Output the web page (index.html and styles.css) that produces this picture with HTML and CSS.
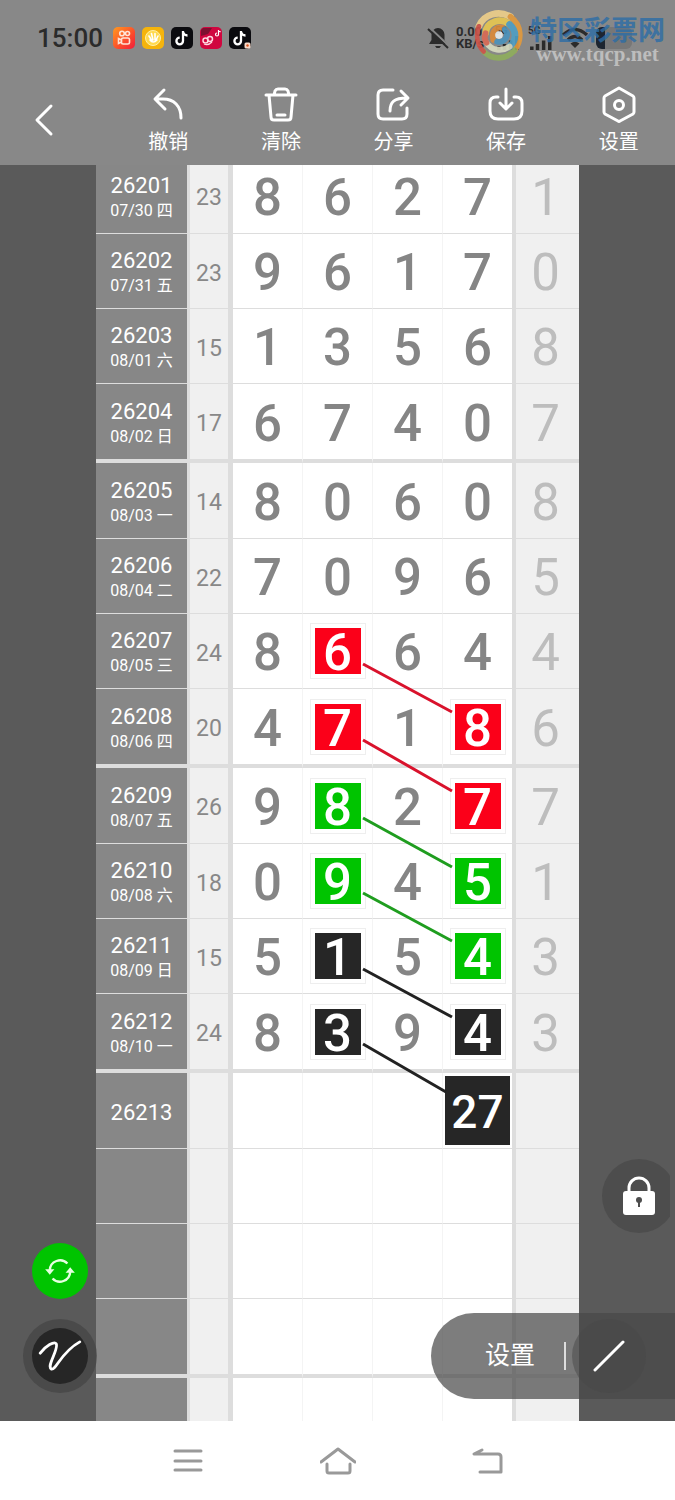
FILE: index.html
```html
<!DOCTYPE html>
<html lang="zh-CN">
  <head>
    <meta charset="UTF-8" />
    <meta name="viewport" content="width=device-width, initial-scale=1.0" />
    <title>走势图</title>
    <link rel="stylesheet" href="styles.css">
  </head>
  <body>
    <header class="header">
      <div class="status-bar">
        <span class="clock">15:00</span>
        <div class="app-icons">
          <svg class="app-icon" viewBox="0 0 22 22">
            <defs>
              <linearGradient id="ks" x1="0" y1="0" x2="1" y2="1">
                <stop offset="0" stop-color="#ff9a1f" />
                <stop offset="0.6" stop-color="#fb4a2c" />
                <stop offset="1" stop-color="#f01c3c" />
              </linearGradient>
            </defs>
            <rect width="22" height="22" rx="5" fill="url(#ks)" />
            <g fill="none" stroke="#ffe3d6" stroke-width="1.6">
              <circle cx="9" cy="6.5" r="2.3" />
              <circle cx="14.5" cy="6.5" r="2" />
              <rect x="8.5" y="11" width="8" height="6" rx="1.6" />
              <path d="M8.500 13 L5.500 11.500 V16.500 L8.500 15" />
            </g>
          </svg>
          <svg class="app-icon" viewBox="0 0 22 22">
            <rect width="22" height="22" rx="5" fill="#f5b40c" />
            <circle cx="11" cy="11" r="7.500" fill="#ffd94d" stroke="#fff0a8" stroke-width="1" />
            <path d="M7 9 L10 14 M9.500 6.500 L11 13 M13 6.500 V13 M16 9 L13.500 14 M8 13 Q11 17 15 13" fill="none" stroke="#fff" stroke-width="1.600" stroke-linecap="round" />
          </svg>
          <svg class="app-icon" viewBox="0 0 22 22">
            <rect width="22" height="22" rx="5" fill="#0b0b0f" />
            <path d="M12 4 V14 A3.300 3.300 0 1 1 8.700 10.700 M12 5 Q13 8.500 16.500 8.500" fill="none" stroke="#fff" stroke-width="2.300" />
          </svg>
          <svg class="app-icon" viewBox="0 0 22 22">
            <rect width="22" height="22" rx="5" fill="#d0063f" />
            <path d="M3 1 H12 L8 7 L1 9 V3 Z" fill="#7d1030" />
            <circle cx="5.500" cy="13.500" r="2.500" fill="none" stroke="#ffd5df" stroke-width="1.500" />
            <circle cx="10" cy="12" r="2.500" fill="none" stroke="#ffd5df" stroke-width="1.500" />
            <path d="M4 17 Q8 19 12 15" fill="none" stroke="#ffd5df" stroke-width="1.200" />
            <path d="M18.500 3 V7.500 A1.500 1.500 0 1 1 17 6 M18.500 3.500 L20.500 5" fill="none" stroke="#fff" stroke-width="1.200" />
          </svg>
          <svg class="app-icon" viewBox="0 0 22 22">
            <rect width="22" height="22" rx="5" fill="#0b0b0f" />
            <path d="M12 4 V14 A3.300 3.300 0 1 1 8.700 10.700 M12 5 Q13 8.500 16.500 8.500" fill="none" stroke="#fff" stroke-width="2.300" />
            <rect x="15.500" y="15.500" width="6" height="6" rx="1.500" fill="#f7d9c8" />
            <circle cx="18.500" cy="18.500" r="1.200" fill="#d9531e" />
          </svg>
        </div>
        <div class="status-right">
          <svg class="bell" viewBox="0 0 22 24">
            <path d="M11 2 A6.500 6.500 0 0 1 17.500 8.500 V14 L20 18 H2 L4.500 14 V8.500 A6.500 6.500 0 0 1 11 2 Z" fill="#2b2b2b" />
            <path d="M8 20 H14 L12.500 22 H9.500 Z" fill="#2b2b2b" />
            <path d="M2 1 L22 20" stroke="#888" stroke-width="2" />
            <path d="M1 3 L21 22" stroke="#2b2b2b" stroke-width="2" />
          </svg>
          <span class="net-speed">0.00<br />KB/s</span>
          <div class="signal">
            <span>5G</span>
            <svg viewBox="0 0 26 16">
              <path d="M2.500 16 V12 M9 16 V9 M16 16 V5 M23 16 V0" stroke="#2b2b2b" stroke-width="4" />
            </svg>
          </div>
          <div class="signal">
            <span>5G</span>
            <svg viewBox="0 0 26 16">
              <path d="M2.500 16 V12 M9 16 V9 M16 16 V5 M23 16 V0" stroke="#2b2b2b" stroke-width="4" />
            </svg>
          </div>
          <svg class="wifi" viewBox="0 0 28 22">
            <path d="M2 8 Q14 -3 26 8 M7 13 Q14 6 21 13" fill="none" stroke="#2b2b2b" stroke-width="3.500" />
            <path d="M9.500 16.500 Q14 13 18.500 16.500 L14 21 Z" fill="#2b2b2b" />
          </svg>
          <svg class="battery" viewBox="0 0 36 22">
            <rect width="36" height="22" rx="6" fill="#777" />
            <path d="M6 0 H9 V22 H6 A6 6 0 0 1 0 16 V6 A6 6 0 0 1 6 0 Z" fill="#1d2530" />
          </svg>
        </div>
        <div class="watermark">
          <svg class="watermark-logo" viewBox="0 0 52 54">
            <g fill="none" stroke-linecap="round">
              <path d="M5 17 C10 4 26 0 38 7" stroke="#efcf8a" stroke-width="7" />
              <path d="M38 7 C50 16 50 32 42 42" stroke="#e39a3c" stroke-width="6" />
              <path d="M42 42 C34 52 18 52 10 43" stroke="#8fae5c" stroke-width="6" />
              <path d="M10 43 C3 36 2 26 5 17" stroke="#d05348" stroke-width="5" />
              <path d="M12 24 C13 12 28 7 37 15" stroke="#e8c850" stroke-width="7" />
              <path d="M37 15 C45 22 44 32 37 38" stroke="#4f9fc4" stroke-width="7" />
              <path d="M37 38 C29 44 18 42 13 34" stroke="#d8dcc0" stroke-width="6" />
              <path d="M13 34 C10 30 11 27 12 24" stroke="#db6a55" stroke-width="6" />
              <path d="M20 31 C17 20 27 15 32 20" stroke="#dc8b3a" stroke-width="6" />
              <path d="M32 20 C38 27 31 34 24 33" stroke="#4a93bd" stroke-width="6" />
            </g>
            <circle cx="26" cy="26" r="4" fill="#e9eef0" />
          </svg>
          <div class="watermark-text">
            <span class="watermark-name">特区彩票网</span>
            <span class="watermark-url">www.tqcp.net</span>
          </div>
        </div>
      </div>
      <nav class="toolbar">
        <button class="back" aria-label="返回">
          <svg viewBox="0 0 20 34"><path d="M17 3 L3 17 L17 31" /></svg>
        </button>
        <button class="tool">
          <svg viewBox="0 0 38 38"><path d="M15 4 L6 13 L16 23 M7 13 H14 C25 13 32 20 32 32" /></svg>
          撤销
        </button>
        <button class="tool">
          <svg viewBox="0 0 38 38"><path d="M4 9 H34 M12 9 L13 5 Q14 3 16 3 H23 Q25 3 26 5 L27 9 M7 9 L9 31 Q9 34 12 34 H26 Q29 34 29 31 L31 9 M15 29 H23" /></svg>
          清除
        </button>
        <button class="tool">
          <svg viewBox="0 0 38 38"><path d="M19 4 H9 Q4 4 4 9 V28 Q4 33 9 33 H28 Q33 33 33 28 V22 M16 25 C16 16 20 12 33 12 M27 5 L34 12 L27 19" /></svg>
          分享
        </button>
        <button class="tool">
          <svg viewBox="0 0 38 38"><path d="M11 11 H9 Q3 11 3 17 V25 Q3 33 11 33 H27 Q35 33 35 25 V17 Q35 11 29 11 H27 M19 3 V22 M13 17 L19 23 L25 17" /></svg>
          保存
        </button>
        <button class="tool">
          <svg viewBox="0 0 38 38"><path d="M19 2 L33 10 Q34 11 34 12 V26 Q34 27 33 28 L20 35 Q19 36 18 35 L5 28 Q4 27 4 26 V12 Q4 11 5 10 Z" /><circle cx="19" cy="19" r="4.500" /></svg>
          设置
        </button>
      </nav>
    </header>

    <main class="board">
      <div class="chart">
        <table class="trend">
          <colgroup>
            <col class="col-issue" />
            <col class="col-sum" />
            <col class="col-num" />
            <col class="col-num" />
            <col class="col-num" />
            <col class="col-num-last" />
            <col class="col-extra" />
          </colgroup>
          <tbody id="rows"></tbody>
        </table>
        <!-- lines between the marked numbers -->
        <svg class="links" viewBox="0 0 483 1000" preserveAspectRatio="none">
          <path class="link-red" d="M267 506 L356 554 M267 582 L356 633" />
          <path class="link-green" d="M267 660 L356 709 M267 735 L356 783" />
          <path class="link-black" d="M267 811 L356 859 M267 886 L350 934" />
        </svg>
      </div>

      <button class="float lock" aria-label="锁定">
        <svg viewBox="0 0 34 40">
          <path d="M7 18 V12 A10 10 0 0 1 27 12 V18" fill="none" stroke="#fff" stroke-width="3" />
          <rect x="1" y="15" width="32" height="24" rx="3" fill="#fff" />
          <circle cx="17" cy="24" r="3" fill="#4d4d4d" />
          <path d="M17 24 V31" stroke="#4d4d4d" stroke-width="2" />
        </svg>
      </button>
      <button class="float refresh" aria-label="刷新">
        <svg viewBox="0 0 32 28">
          <path d="M5 13 A11 11 0 0 1 24 6 M27 15 A11 11 0 0 1 8 22" fill="none" stroke="#e6ffe0" stroke-width="2.500" />
          <path d="M0 12 H10 L5 18 Z M22 16 H32 L27 10 Z" fill="#e6ffe0" />
        </svg>
      </button>
      <button class="float pen" aria-label="画笔">
        <span class="pen-inner">
          <svg viewBox="0 0 46 34">
            <path d="M2 14 C8 6 17 1 19 4 C22 10 8 28 14 31 C19 32 24 13 44 2" />
          </svg>
        </span>
      </button>
      <div class="pill">
        <button class="pill-settings">设置</button>
        <button class="pill-line" aria-label="直线">
          <svg viewBox="0 0 32 32"><path d="M2 30 L30 2" /></svg>
        </button>
      </div>
    </main>

    <footer class="nav-bar">
      <button aria-label="最近任务">
        <svg viewBox="0 0 36 30"><path d="M5 5 H31 M5 15 H31 M5 24 H31" /></svg>
      </button>
      <button aria-label="主屏幕">
        <svg viewBox="0 0 36 30"><path d="M1 16 L18 3 L35 16 M7 18 V25 Q7 27 9 27 H28 Q30 27 30 25 V18" /></svg>
      </button>
      <button aria-label="返回">
        <svg viewBox="0 0 36 30"><path d="M12 4 L4 8 H28 Q31 8 31 11 V26 H10" /></svg>
      </button>
    </footer>

    <script src="script.js"></script>
  </body>
</html>
```

FILE: styles.css
```css
/* Global styles */
* {
  box-sizing: border-box;
  margin: 0;
  padding: 0;
}

body {
  display: flex;
  flex-direction: column;
  height: 100vh;
  overflow: hidden;
  background-color: #5a5a5a;
  font-family: Roboto, "Noto Sans CJK SC", sans-serif;
}

button {
  border: none;
  background: none;
  color: white;
  font-family: inherit;
  cursor: pointer;
}

svg {
  display: block;
}

/* Header */
.header {
  background-color: #888;
}

.status-bar {
  position: relative;
  display: flex;
  align-items: center;
  height: 75px;
  padding: 0 43px 0 37px;
}

.clock {
  color: #2b2b2b;
  font-size: 26px;
  font-weight: 500;
}

.app-icons {
  display: flex;
  gap: 7px;
  margin-left: 10px;
}

.app-icon {
  width: 22px;
  height: 22px;
}

.status-right {
  display: flex;
  align-items: center;
  gap: 7px;
  margin-left: auto;
}

.bell {
  width: 22px;
  height: 24px;
}

.net-speed {
  width: 32px;
  color: #2b2b2b;
  font-size: 13px;
  line-height: 12px;
  font-weight: 700;
}

.signal {
  color: #2b2b2b;
  font-size: 10px;
  line-height: 10px;
  font-weight: 700;
}

.signal span {
  display: block;
}

.signal svg {
  width: 26px;
  height: 14px;
}

.wifi {
  width: 28px;
  height: 22px;
}

.battery {
  width: 36px;
  height: 22px;
}

.watermark {
  position: absolute;
  top: 9px;
  right: 10px;
  display: flex;
  gap: 6px;
}

.watermark-logo {
  width: 50px;
  height: 54px;
  opacity: 0.9;
}

.watermark-text {
  display: flex;
  flex-direction: column;
  padding-top: 8px;
}

.watermark-name {
  color: #2c6da6;
  font-size: 27px;
  line-height: 28px;
  font-weight: 700;
  opacity: 0.8;
}

.watermark-url {
  color: #bdbdbd;
  font-family: "Liberation Serif", serif;
  font-size: 21px;
  line-height: 18px;
  font-weight: 700;
  text-align: center;
}

.toolbar {
  display: flex;
  height: 90px;
}

.toolbar path,
.toolbar circle {
  fill: none;
  stroke: white;
  stroke-width: 3;
  stroke-linecap: round;
  stroke-linejoin: round;
}

.back {
  width: 112px;
  padding-left: 34px;
}

.back svg {
  width: 20px;
  height: 34px;
}

.tool {
  display: flex;
  flex: 1;
  flex-direction: column;
  align-items: center;
  gap: 4px;
  padding-top: 11px;
  font-size: 20px;
  line-height: 28px;
}

.tool svg {
  width: 38px;
  height: 38px;
}

/* Trend chart */
.board {
  position: relative;
  flex: 1;
  min-height: 0;
  overflow: hidden;
  padding: 0 96px;
}

.chart {
  position: relative;
  margin-top: -7px;
}

.trend {
  width: 100%;
  table-layout: fixed;
  border-spacing: 0;
  background-color: white;
}

.col-issue {
  width: 94px;
}

.col-sum {
  width: 43px;
}

.col-num {
  width: 70px;
}

.col-num-last {
  width: 73px;
}

.col-extra {
  width: 63px;
}

.trend th,
.trend td {
  height: 75px;
  padding-top: 4px;
  border-bottom: 1px solid #ddd;
  text-align: center;
  vertical-align: middle;
}

.trend tr:nth-child(4n + 1) > * {
  height: 76px;
}

.trend tr:nth-child(4n) > * {
  height: 79px;
  border-bottom: 4px solid #ddd;
}

.trend .issue {
  background-color: #878787;
  border-right: 3px solid #ddd;
  color: white;
  font-weight: 400;
}

.issue strong {
  display: block;
  font-size: 22px;
  line-height: 26px;
  font-weight: 400;
}

.issue small {
  display: block;
  font-size: 16px;
  line-height: 24px;
}

.trend .sum {
  background-color: #f0f0f0;
  border-right: 5px solid #ddd;
  color: #888;
  font-size: 23px;
}

.num {
  border-right: 1px solid #f4f4f4;
  color: #858585;
  font-size: 51px;
  line-height: 56px;
  font-weight: 500;
}

.trend .num-last {
  border-right: 4px solid #ddd;
}

.trend .extra {
  padding-right: 4px;
  background-color: #f0f0f0;
  color: #bdbdbd;
  font-size: 51px;
  line-height: 56px;
}

.trend .marked {
  padding-top: 0;
}

.mark {
  display: block;
  width: 46px;
  height: 46px;
  margin: 0 auto;
  color: white;
  line-height: 50px;
  outline: 1px solid #eee;
  outline-offset: 4px;
}

.mark-red {
  background-color: #fb0019;
}

.mark-green {
  background-color: #00c400;
}

.mark-black {
  background-color: #262626;
}

.mark-big {
  width: 65px;
  height: 69px;
  font-size: 46px;
  line-height: 72px;
  outline: none;
}

.links {
  position: absolute;
  top: 0;
  left: 0;
  width: 100%;
  height: 1000px;
}

.links path {
  fill: none;
  stroke-width: 3;
}

.links .link-red {
  stroke: #d9122c;
}

.links .link-green {
  stroke: #1f9d1f;
}

.links .link-black {
  stroke: #222;
}

/* Floating controls */
.float {
  position: absolute;
  display: flex;
  justify-content: center;
  align-items: center;
  border-radius: 50%;
}

.lock {
  right: -1px;
  bottom: 188px;
  width: 74px;
  height: 74px;
  background-color: #4d4d4d;
  clip-path: inset(0 6px 0 0);
}

.lock svg {
  width: 34px;
  height: 40px;
}

.refresh {
  left: 32px;
  bottom: 122px;
  width: 56px;
  height: 56px;
  background-color: #00c400;
}

.refresh svg {
  width: 30px;
  height: 26px;
}

.pen {
  left: 23px;
  bottom: 28px;
  width: 74px;
  height: 74px;
  background-color: rgba(64, 64, 64, 0.6);
}

.pen-inner {
  display: flex;
  justify-content: center;
  align-items: center;
  width: 56px;
  height: 56px;
  border-radius: 50%;
  background-color: #262626;
}

.pen svg {
  width: 44px;
  height: 32px;
}

.pen path,
.pill path {
  fill: none;
  stroke: white;
  stroke-width: 3;
  stroke-linecap: round;
}

.pill {
  position: absolute;
  right: 0;
  bottom: 22px;
  display: flex;
  align-items: center;
  width: 244px;
  height: 86px;
  padding-left: 54px;
  border-radius: 43px 0 0 43px;
  background-color: rgba(72, 72, 72, 0.71);
}

.pill-settings {
  padding-right: 29px;
  border-right: 2px solid #ddd;
  font-size: 25px;
  line-height: 28px;
}

.pill-line {
  display: flex;
  justify-content: center;
  align-items: center;
  width: 74px;
  height: 74px;
  margin-left: 6px;
  border-radius: 50%;
  background-color: rgba(72, 72, 72, 0.5);
}

.pill-line svg {
  width: 32px;
  height: 32px;
}

/* System navigation */
.nav-bar {
  display: flex;
  justify-content: center;
  gap: 114px;
  height: 79px;
  background-color: white;
}

.nav-bar svg {
  width: 36px;
  height: 30px;
}

.nav-bar path {
  fill: none;
  stroke: #999;
  stroke-width: 3;
  stroke-linecap: round;
  stroke-linejoin: round;
}
```

FILE: script.js
```js
const draws = [
  ["26201", "07/30 四", 23, "8627", 1],
  ["26202", "07/31 五", 23, "9617", 0],
  ["26203", "08/01 六", 15, "1356", 8],
  ["26204", "08/02 日", 17, "6740", 7],
  ["26205", "08/03 一", 14, "8060", 8],
  ["26206", "08/04 二", 22, "7096", 5],
  ["26207", "08/05 三", 24, "8664", 4],
  ["26208", "08/06 四", 20, "4718", 6],
  ["26209", "08/07 五", 26, "9827", 7],
  ["26210", "08/08 六", 18, "0945", 1],
  ["26211", "08/09 日", 15, "5154", 3],
  ["26212", "08/10 一", 24, "8394", 3],
  ["26213", "", "", "", ""],
  ["", "", "", "", ""],
  ["", "", "", "", ""],
  ["", "", "", "", ""],
  ["", "", "", "", ""],
];

// issue -> column index -> colour
const marks = {
  26207: { 1: "red" },
  26208: { 1: "red", 3: "red" },
  26209: { 1: "green", 3: "red" },
  26210: { 1: "green", 3: "green" },
  26211: { 1: "black", 3: "green" },
  26212: { 1: "black", 3: "black" },
};

function numCell(issue, digits, i) {
  let cls = i === 3 ? "num num-last" : "num";
  const color = marks[issue] && marks[issue][i];
  let content = digits[i] || "";
  if (color) {
    cls += " marked";
    content = `<span class="mark mark-${color}">${content}</span>`;
  }
  if (issue === "26213" && i === 3) {
    cls += " marked";
    content = '<span class="mark mark-black mark-big">27</span>';
  }
  return `<td class="${cls}">${content}</td>`;
}

document.getElementById("rows").innerHTML = draws
  .map(([issue, date, sum, digits, extra]) => {
    const label = issue ? `<strong>${issue}</strong>` : "";
    const day = date ? `<small>${date}</small>` : "";
    const nums = [0, 1, 2, 3].map((i) => numCell(issue, digits, i)).join("");
    return `<tr><th class="issue">${label}${day}</th><td class="sum">${sum}</td>${nums}<td class="extra">${extra}</td></tr>`;
  })
  .join("");
```
